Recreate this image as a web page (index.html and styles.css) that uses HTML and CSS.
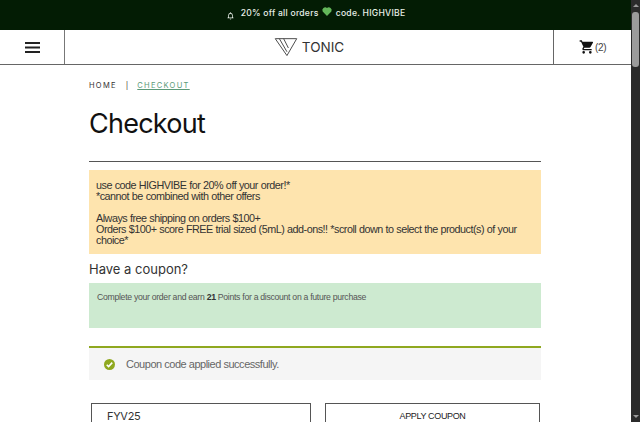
FILE: index.html
```html
<!DOCTYPE html>
<html lang="en">
<head>
<meta charset="utf-8">
<title>Checkout</title>
<link rel="stylesheet" href="styles.css">
</head>
<body>
<div class="page">
  <div class="content">
    <div class="promo">
      <svg class="bell" viewBox="0 0 24 24" width="9" height="9"><path d="M12 3a1.5 1.5 0 0 0-1.5 1.5v.6A6 6 0 0 0 6 11v5l-2 2v1h16v-1l-2-2v-5a6 6 0 0 0-4.500-5.900v-.6A1.500 1.500 0 0 0 12 3zM8 17v-6a4 4 0 0 1 8 0v6zM10 20.500a2 2 0 0 0 4 0z" fill="#e8efe8"/></svg>
      <span class="promo-text">20% off all orders <svg class="heart" viewBox="0 0 24 24" width="12" height="11"><path d="M12 22 2.500 12A6.200 6.200 0 0 1 12 4.500 6.200 6.200 0 0 1 21.500 12z" fill="#63b75a"/></svg> code. HIGHVIBE</span>
    </div>
    <header class="site-header">
      <div class="menu-cell">
        <svg viewBox="0 0 15 11" width="15" height="11"><path d="M0 0h15v2H0zM0 4.500h15v2H0zM0 9h15v2H0z" fill="#222"/></svg>
      </div>
      <div class="logo-cell">
        <svg class="logo" viewBox="0 0 24 20" width="24" height="19"><path d="M.7.7H23.300L13 18.500ZM5 .7 13 14.500M9.500.7 14.500 10.500" fill="none" stroke="#444" stroke-width="1"/></svg>
        <span class="logo-text">TONIC</span>
      </div>
      <div class="cart-cell">
        <svg viewBox="0 0 24 24" width="16" height="16"><path d="M7 18a2 2 0 1 0 0 4 2 2 0 0 0 0-4zM1 2v2h2l3.600 7.600-1.350 2.450A2 2 0 0 0 7 17h12v-2H7.420a.25.25 0 0 1-.25-.25l.03-.12L8.100 13h7.450c.75 0 1.410-.41 1.750-1.030l3.580-6.490A1 1 0 0 0 20 4H5.210l-.94-2zm16 16a2 2 0 1 0 0 4 2 2 0 0 0 0-4z" fill="#111"/></svg>
        <span class="cart-count">(2)</span>
      </div>
    </header>
    <main class="checkout">
      <nav class="crumbs"><span>HOME</span><span class="sep">|</span><a class="current" href="#">CHECKOUT</a></nav>
      <h1 class="title">Checkout</h1>
      <hr class="rule">
      <div class="notice">
        <p>use code HIGHVIBE for 20% off your order!*<br>*cannot be combined with other offers</p>
        <p>Always free shipping on orders $100+<br>Orders $100+ score FREE trial sized (5mL) add-ons!! *scroll down to select the product(s) of your choice*</p>
      </div>
      <h2 class="coupon-title">Have a coupon?</h2>
      <div class="points">Complete your order and earn <b>21</b> Points for a discount on a future purchase</div>
      <div class="success">
        <svg viewBox="0 0 24 24" width="11" height="11"><circle cx="12" cy="12" r="12" fill="#8fa81f"/><path d="m6 12.500 4 4 8-8.500" fill="none" stroke="#fff" stroke-width="3.500"/></svg>
        <span>Coupon code applied successfully.</span>
      </div>
      <form class="coupon-form">
        <div class="field">FYV25</div>
        <button class="apply" type="button">APPLY COUPON</button>
      </form>
    </main>
  </div>
  <aside class="scrollbar">
    <span class="arrow up"></span>
    <span class="thumb"></span>
    <span class="arrow down"></span>
  </aside>
</div>
</body>
</html>
```
FILE: styles.css
```css
* { box-sizing: border-box; }
html, body { margin: 0; height: 422px; overflow: hidden; background: #fff; }
body { font-family: "Liberation Sans", Arial, sans-serif; color: #333; }
.page { display: flex; height: 422px; }
.content { flex: 1; min-width: 0; overflow: hidden; }

.promo { height: 30px; background: #031c04; color: #e8efe8; display: flex; align-items: center; justify-content: center; gap: 6px; font-family: Inter, sans-serif; font-size: 8.600px; font-weight: 500; letter-spacing: .25px; padding: 0 0 6px 0; }
.bell { margin-top: 6px; }
.heart { vertical-align: -1px; }

.site-header { height: 35px; display: flex; border-bottom: 1px solid #666; }
.menu-cell { width: 65px; border-right: 1px solid #777; display: flex; align-items: center; justify-content: center; }
.logo-cell { flex: 1; display: flex; align-items: center; justify-content: center; gap: 4px; }
.logo-text { font-family: Inter, sans-serif; font-size: 13.500px; color: #333; letter-spacing: 0; }
.cart-cell { width: 78px; border-left: 1px solid #666; display: flex; align-items: center; gap: 0; padding-left: 25px; }
.cart-count { font-size: 10px; color: #444; letter-spacing: -.3px; }

.checkout { margin-left: 89px; width: 452px; padding-top: 15px; }
.crumbs { display: flex; align-items: center; font-family: Inter, sans-serif; font-size: 7.500px; letter-spacing: 1.300px; color: #333; height: 10px; }
.sep { margin: 0 9px; letter-spacing: 0; }
.current { color: #5b9a78; text-decoration: underline; }
.title { font-family: Inter, sans-serif; font-weight: 400; font-size: 27px; letter-spacing: -.75px; color: #111; margin: 17px 0 0; line-height: 34px; height: 34px; }
.rule { border: 0; border-top: 1px solid #555; margin: 20px 0 8px; }
.notice { background: #fee4ae; color: #333; font-size: 10.800px; line-height: 11px; letter-spacing: -.5px; word-spacing: .25px; padding: 10px 7px 9px; height: 84px; }
.notice p { margin: 0 0 11px; }
.notice p:last-child { margin: 0; }
.coupon-title { font-family: Inter, sans-serif; font-weight: 400; font-size: 13px; color: #333; margin: 6px 0 0; line-height: 18px; height: 23px; letter-spacing: 0; }
.points { background: #cdead0; color: #555; font-size: 8.700px; line-height: 11px; height: 45px; padding: 9px 8px; letter-spacing: -.3px; }
.points b { color: #333; }
.success { margin-top: 18px; height: 34px; background: #f5f5f5; border-top: 2px solid #8fa81f; display: flex; align-items: center; gap: 11px; padding: 0 15px; color: #666; font-size: 11px; letter-spacing: -.48px; }
.coupon-form { display: flex; margin: 23px 0 0 2px; gap: 14px; }
.field { width: 220px; height: 40px; border: 1px solid #555; padding: 5px 15px; font-size: 11px; letter-spacing: -.3px; color: #333; font-family: Inter, sans-serif; }
.apply { width: 215px; height: 40px; border: 1px solid #555; background: #fff; color: #222; font-family: "Liberation Sans", Arial, sans-serif; font-size: 9px; letter-spacing: -.35px; padding: 0 0 15px; }

.scrollbar { width: 9px; background: #2b2b2b; display: flex; flex-direction: column; align-items: center; justify-content: space-between; padding: 4px 0; position: relative; }
.thumb { position: absolute; left: 1px; top: 12px; width: 7px; height: 55px; background: #9b9b9b; border-radius: 3px; }
.arrow { width: 0; height: 0; border-left: 3px solid transparent; border-right: 3px solid transparent; }
.up { border-bottom: 3px solid #999; }
.down { border-top: 3px solid #999; }
```
